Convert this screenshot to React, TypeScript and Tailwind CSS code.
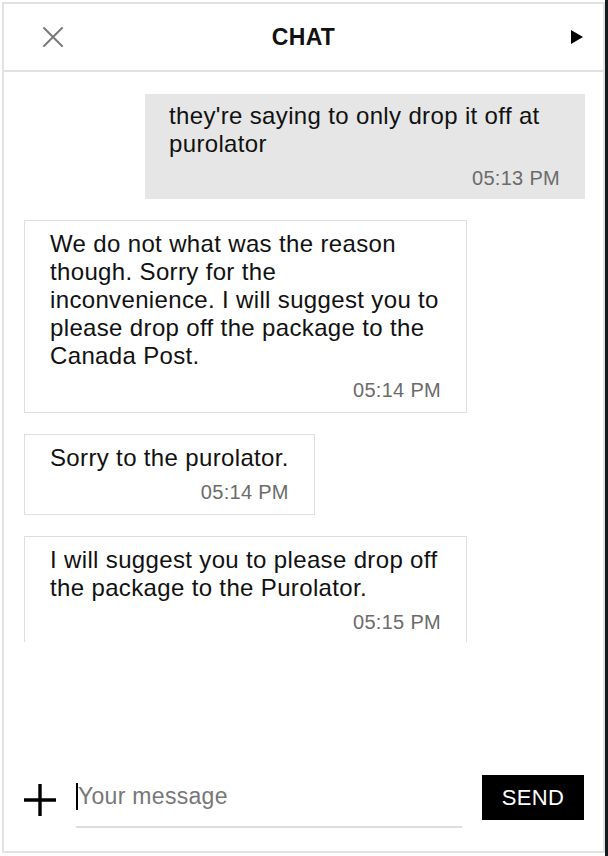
type Msg = {
  text: string
  time: string
  mine?: boolean
}

const messages: Msg[] = [
  { text: "they're saying to only drop it off at purolator", time: "05:13 PM", mine: true },
  {
    text: "We do not what was the reason though. Sorry for the inconvenience. I will suggest you to please drop off the package to the Canada Post.",
    time: "05:14 PM",
  },
  { text: "Sorry to the purolator.", time: "05:14 PM" },
  { text: "I will suggest you to please drop off the package to the Purolator.", time: "05:15 PM" },
]

function Bubble({ msg }: { msg: Msg }) {
  return (
    <div
      className={
        msg.mine
          ? "self-end max-w-[440px] bg-[#e6e6e6] pl-[24px] pr-[25px] pt-[8px] pb-[9px]"
          : "self-start max-w-[443px] border border-[#dedede] bg-white pl-[25px] pr-[25px] pt-[9px] pb-[10px]"
      }
    >
      <p className="text-[24px] leading-[28px] tracking-[0.35px] text-[#111]">{msg.text}</p>
      <p className="mt-[8px] text-right text-[20px] leading-[24px] tracking-[0.3px] text-[#6b6b6b]">{msg.time}</p>
    </div>
  )
}

export default function App() {
  return (
    <div className="flex h-[856px] w-[608px] bg-white font-['Liberation_Sans',Arial,sans-serif]">
      <div className="mt-[2px] ml-[2px] flex h-[851px] w-[603px] flex-col border-2 border-[#e2e2e2] bg-white">
        {/* header */}
        <div className="grid h-[68px] shrink-0 grid-cols-[1fr_auto_1fr] items-center border-b-2 border-[#e2e2e2] px-[19px]">
          <svg width="24" height="24" viewBox="0 0 24 24" className="ml-[18px] justify-self-start">
            <path d="M3 3 L21 21 M21 3 L3 21" stroke="#7a7a7a" strokeWidth="2" strokeLinecap="round" />
          </svg>
          <h1 className="text-[23px] font-bold tracking-[0.3px] text-[#111]">CHAT</h1>
          <svg width="14" height="16" viewBox="0 0 14 16" className="justify-self-end">
            <path d="M1 1 L13 8 L1 15 Z" fill="#000" />
          </svg>
        </div>

        {/* messages */}
        <div className="flex h-[570px] shrink-0 flex-col gap-[21px] overflow-hidden pt-[22px] pl-[20px] pr-[18px]">
          {messages.map((m, i) => (
            <Bubble key={i} msg={m} />
          ))}
        </div>

        {/* footer */}
        <div className="flex flex-1 items-end pb-[23px] pl-[20px] pr-[17px]">
          <div className="flex w-full items-start">
            <svg width="32" height="32" viewBox="0 0 32 32" className="mt-[9px]">
              <path d="M16 0 V32 M0 16 H32" stroke="#000" strokeWidth="3.4" />
            </svg>
            <div className="ml-[20px] flex h-[53px] w-[386px] items-center border-b-2 border-[#dddddd] pb-[9px]">
              <span className="h-[27px] w-[2px] shrink-0 bg-black" />
              <input
                className="w-full bg-transparent text-[23px] tracking-[0.3px] text-[#333] outline-none placeholder:text-[#777]"
                placeholder="Your message"
              />
            </div>
            <button className="ml-[20px] h-[45px] w-[102px] bg-black text-[22px] tracking-[0.3px] text-white">SEND</button>
          </div>
        </div>
      </div>
      <div className="ml-auto h-full w-[3px] bg-[#141a22]" />
    </div>
  )
}
